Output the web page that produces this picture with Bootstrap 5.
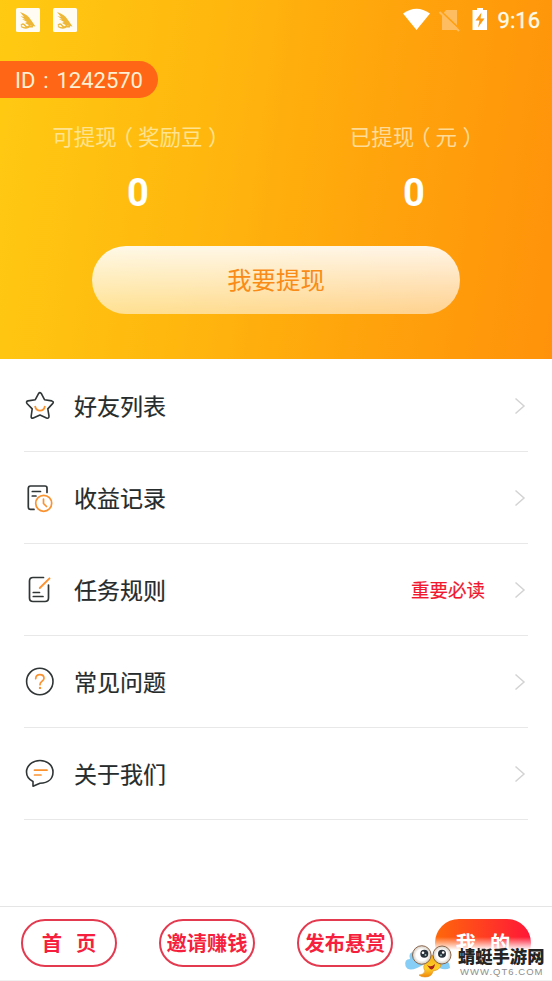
<!DOCTYPE html>
<html lang="zh-CN">
<head>
<meta charset="utf-8">
<meta name="viewport" content="width=device-width, initial-scale=1">
<title>我的</title>
<link href="https://cdn.jsdelivr.net/npm/bootstrap@5.3.0/dist/css/bootstrap.min.css" rel="stylesheet">
<style>
body{font-family:Roboto,"Noto Sans CJK SC",sans-serif;color:#262b2b;background:#fff;overflow:hidden}
.screen{width:552px;height:981px}
.hero{height:359px;background:linear-gradient(98deg,#ffca12 0%,#ffb80e 35%,#ffa50c 65%,#ff920a 100%)}
.status{height:40px;padding:0 12px 0 16px}
.notice-gap{margin-left:13px}
.status-time{font-size:22px;line-height:40px;font-weight:400;color:#fffbe9;-webkit-text-stroke:.35px #fffbe9;padding-top:1px}
.id-tag{width:158px;height:37px;margin-top:21px;padding-left:15px;background:#ff6716;border-radius:0 19px 19px 0;color:#fff0d3;font-size:22px;line-height:39px;white-space:nowrap}
.id-tag .colon{display:inline-block;width:21px;text-align:center}
.stats{margin-top:22px}
.stat-label{height:33px;font-size:21.5px;line-height:35px;color:#ffe391;white-space:nowrap}
.stat-label.right{color:#ffdb98}
.paren{font-feature-settings:"halt";margin:0 5px 0 5.5px}
.stat-num{font-size:38px;line-height:44px;margin-top:18px;color:#fff}
.withdraw{width:368px;height:68px;margin-top:31px;border:0;border-radius:34px;background:linear-gradient(rgba(255,255,255,.9),rgba(255,255,255,.54));color:#f98b17;font-size:24.4px;line-height:68px;padding:1px 0 0}
.menu{margin:0 24px;padding-top:1px}
.menu-row{height:92px;border-bottom:1px solid #e8e8e8;font-size:23px}
.menu-row span{padding-top:5px;-webkit-text-stroke:.2px currentColor}
.menu-row .glyph{width:32px;height:32px;flex:none;margin-right:18px}
.must-read{font-size:18.5px;color:#f0172f;margin-right:29px}
.chev{width:12px;height:18px;margin-right:2px}
.tabs{height:75px;margin-top:86px;border-top:1px solid #e5e5e5;border-bottom:1px solid #f0f0f0;padding-top:12px}
.tab-btn{width:96px;height:48px;border:2px solid #e43a50;border-radius:24px;color:#f61f3d;font-size:20.3px;line-height:47px;font-weight:700;text-align:center;white-space:nowrap;padding:0}
.tab-btn.two{word-spacing:9px}
.tab-btn.on{border:0;background:linear-gradient(90deg,#ff680a,#ff1638);color:#fff;line-height:50px}
.watermark{left:404px;top:937px;width:148px;height:43px}
.fade-band{left:30px;top:0;width:118px;height:43px;background:linear-gradient(rgba(255,255,255,0),#fff 13px)}
.wm-bug{left:0;top:7px}
.wm-name{left:54px;top:9px;font:900 17.3px/20px "Noto Sans CJK SC",sans-serif;color:#242424;white-space:nowrap}
.wm-url{left:56px;top:29px;font:9.5px/12px "Liberation Sans",sans-serif;color:#8e8e8e;letter-spacing:1.02px;white-space:nowrap}
</style>
<script src="https://cdn.jsdelivr.net/npm/bootstrap@5.3.0/dist/js/bootstrap.bundle.min.js"></script>
</head>
<body>
<svg class="d-none">
  <symbol id="notice" viewBox="0 0 24 24"><rect width="24" height="24" rx="1.5" fill="#fffdf3"/><path d="M4 4Q12 6.500 15 12L19.500 18.500Q13 18 9 15L11 14L6 11L9 11.500L4.500 8L8 9Z" fill="#eeb737"/><path d="M5 17.500q2-3 4 0t5-.5M5 18.500q5 3 9 0l3 .3" fill="none" stroke="#eeb737" stroke-width="1.400"/></symbol>
  <symbol id="chevron" viewBox="0 0 12 18"><path d="M1.500 1.500L10 9L1.500 16.500" fill="none" stroke="#d3d3d3" stroke-width="1.500"/></symbol>
</svg>
<div class="screen position-relative d-flex flex-column">
  <header class="hero d-flex flex-column">
    <div class="status d-flex align-items-center">
      <svg width="24" height="24"><use href="#notice"/></svg>
      <svg class="notice-gap" width="24" height="24"><use href="#notice"/></svg>
      <svg class="ms-auto" width="95" height="26" viewBox="0 0 95 26">
        <path d="M0 6.500Q13.500-3 27 6.500L13.500 23Z" fill="#fff"/>
        <path d="M43 3h11v20H39V8z" fill="#ffbd62"/><path d="M38 4.500L56 21.500" stroke="#ffa011" stroke-width="2"/><path d="M36.500 5L56 24" stroke="#ffbd62" stroke-width="2"/>
        <path d="M74 1h6v2h4v20H69.500V3H74z" fill="#fff"/><path d="M78.500 5.500L72.500 13.500h4L75 20.500L81.500 11.500h-4z" fill="#ff9a13"/>
      </svg>
      <span class="status-time">9:16</span>
    </div>
    <div class="id-tag">ID<span class="colon">:</span>1242570</div>
    <div class="stats row g-0 text-center">
      <div class="col-6"><div class="stat-label">可提现<span class="paren">（</span>奖励豆<span class="paren">）</span></div><div class="stat-num fw-bold">0</div></div>
      <div class="col-6"><div class="stat-label right">已提现<span class="paren">（</span>元<span class="paren">）</span></div><div class="stat-num fw-bold">0</div></div>
    </div>
    <button class="withdraw btn align-self-center">我要提现</button>
  </header>
  <main class="menu">
    <div class="menu-row d-flex align-items-center">
      <svg class="glyph" viewBox="0 0 32 32" fill="none" stroke="#303536" stroke-width="1.600" stroke-linejoin="round"><path d="M14.400 3.800Q16 1.500 17.500 3.800L20.500 9.700L27.800 10.900Q30.400 11.600 28.600 13.600L23.800 18.900L25 26Q25.100 28.800 22.500 28L16 25L9.300 28Q6.800 28.700 7.200 26L8.200 18.900L3.200 13.700Q1.500 11.500 4 10.900L11.300 9.700Z"/><path d="M11 16Q12 20.700 16 20.700T21 16" stroke="#fa9230" stroke-width="1.800"/></svg>
      <span>好友列表</span><svg class="chev ms-auto"><use href="#chevron"/></svg>
    </div>
    <div class="menu-row d-flex align-items-center">
      <svg class="glyph" viewBox="0 0 32 32" fill="none" stroke="#303536" stroke-width="1.700" stroke-linecap="round"><path d="M23 10.500V6Q23 4 21 4H6.500Q4.300 4 4.300 6.500V25Q4.300 27.400 6.500 27.400H10"/><path d="M8.300 9.500H16.500M8.300 14H12"/><circle cx="19.700" cy="21.300" r="8" stroke="#fa9230"/><path d="M19.500 17V21.500L22.500 24.500" stroke="#fa9230"/></svg>
      <span>收益记录</span><svg class="chev ms-auto"><use href="#chevron"/></svg>
    </div>
    <div class="menu-row d-flex align-items-center">
      <svg class="glyph" viewBox="0 0 32 32" fill="none" stroke="#303536" stroke-width="1.700" stroke-linecap="round"><path d="M19.500 3.500H9Q5.500 3.500 5.500 7V24Q5.500 27.500 9 27.500H21Q24.500 27.500 24.500 24V11"/><path d="M9.300 18.500H15.500M9.300 22.500H19"/><path d="M15.800 14L25.500 4.300" stroke="#fa9230" stroke-width="1.900"/></svg>
      <span>任务规则</span><span class="must-read ms-auto">重要必读</span><svg class="chev"><use href="#chevron"/></svg>
    </div>
    <div class="menu-row d-flex align-items-center">
      <svg class="glyph" viewBox="0 0 32 32" fill="none" stroke="#303536" stroke-width="1.600"><circle cx="15.800" cy="15.500" r="13.200"/><path d="M11.700 12.700Q11.900 8.600 15.900 8.600T20 12.200Q20 14.200 17.800 15.400Q16 16.500 16 18.700" stroke="#fa9230" stroke-width="1.700" stroke-linecap="round"/><circle cx="16" cy="21.900" r="1.200" fill="#fa9230" stroke="none"/></svg>
      <span>常见问题</span><svg class="chev ms-auto"><use href="#chevron"/></svg>
    </div>
    <div class="menu-row d-flex align-items-center">
      <svg class="glyph" viewBox="0 0 32 32" fill="none" stroke="#303536" stroke-width="1.600" stroke-linejoin="round"><path d="M9 23.500C5 21.500 2.500 18 2.500 14C2.500 7.500 8.400 2.500 16 2.500S29 7.500 29 14S24.500 25 16 25.200Q12.500 26.500 9 28.200Z"/><path d="M10.500 12.200H23M10.500 17H17" stroke="#fa9230" stroke-width="1.700" stroke-linecap="round"/></svg>
      <span>关于我们</span><svg class="chev ms-auto"><use href="#chevron"/></svg>
    </div>
  </main>
  <nav class="tabs row g-0">
    <div class="col-3 d-flex justify-content-center"><div class="tab-btn two">首 页</div></div>
    <div class="col-3 d-flex justify-content-center"><div class="tab-btn">邀请赚钱</div></div>
    <div class="col-3 d-flex justify-content-center"><div class="tab-btn">发布悬赏</div></div>
    <div class="col-3 d-flex justify-content-center"><div class="tab-btn two on">我 的</div></div>
  </nav>
  <div class="watermark position-absolute">
    <div class="fade-band position-absolute"></div>
    <svg class="wm-bug position-absolute" width="50" height="36" viewBox="0 0 50 36">
      <defs><radialGradient id="eye"><stop offset=".6" stop-color="#fff"/><stop offset="1" stop-color="#d1c9bc"/></radialGradient><linearGradient id="bee" x2="0" y2="1"><stop stop-color="#f5a910"/><stop offset=".6" stop-color="#ffd22b"/><stop offset="1" stop-color="#ef870b"/></linearGradient></defs>
      <path d="M10 8Q4 8 6 15Q0 15 1.500 22Q4 28 13 24L23 19L21 13ZM36 15Q46 15 46 24Q39 28 29 20Z" fill="#86cef5"/>
      <path d="M26 12Q30 10 31 15L37 21Q36 26 29 27Q28 33 21 33Q17 33 15 31Q20 31 21 27Q18 22 22 19Q26 17 26 12Z" fill="url(#bee)" stroke="#e48a10" stroke-width=".6"/>
      <path d="M23 21Q27 24 31 20Q30 27 26 25Z" fill="#a9231c"/>
      <circle cx="17.800" cy="11" r="9.300" fill="url(#eye)" stroke="#805a40" stroke-width=".9"/><circle cx="38" cy="11" r="9" fill="url(#eye)" stroke="#805a40" stroke-width=".9"/>
      <circle cx="20.300" cy="9.800" r="4" fill="#283139"/><circle cx="38" cy="9.800" r="4" fill="#283139"/><circle cx="19" cy="8.700" r="1.300" fill="#fff"/><circle cx="21.500" cy="11" r="1" fill="#9bb"/><circle cx="39.200" cy="8.500" r="1.300" fill="#fff"/><circle cx="37" cy="11.200" r="1" fill="#9bb"/>
    </svg>
    <div class="wm-name position-absolute">蜻蜓手游网</div>
    <div class="wm-url position-absolute">WWW.QT6.COM</div>
  </div>
</div>
</body>
</html>
